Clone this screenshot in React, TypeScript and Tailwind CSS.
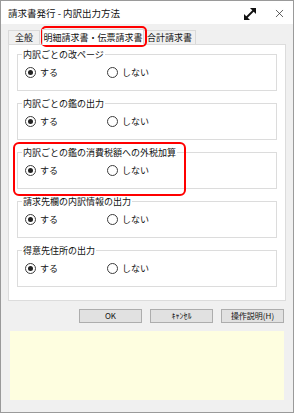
import { X } from 'lucide-react';

const groups = [
  '内訳ごとの改ページ',
  '内訳ごとの鑑の出力',
  '内訳ごとの鑑の消費税額への外税加算',
  '請求先欄の内訳情報の出力',
  '得意先住所の出力',
];

function Radio({ checked, label }: { checked: boolean; label: string }) {
  return (
    <div className="flex items-center gap-[4px]">
      <span className="w-[11px] h-[11px] rounded-full border border-[#3c3c3c] bg-white flex items-center justify-center">
        {checked && <span className="w-[5px] h-[5px] rounded-full bg-[#222]" />}
      </span>
      <span>{label}</span>
    </div>
  );
}

function Group({ title }: { title: string }) {
  return (
    <fieldset className="border border-[#dcdcdc] h-[43px] px-[7px] mb-[6px]">
      <legend className="px-[1px] ml-[-3px] leading-[13px]">{title}</legend>
      <div className="flex items-center pt-[5px]">
        <div className="w-[82px]">
          <Radio checked label="する" />
        </div>
        <Radio checked={false} label="しない" />
      </div>
    </fieldset>
  );
}

export default function App() {
  return (
    <div
      className="relative w-[294px] h-[413px] bg-[#f0f0f0] border border-[#9a9a9a] flex flex-col text-[9px] text-[#111]"
      style={{ fontFamily: '"Noto Sans CJK JP", "Noto Sans", sans-serif' }}
    >
      {/* title bar */}
      <div className="h-[23px] bg-white flex items-center pl-[7px] pr-[7px] pt-[2px]">
        <span className="flex-1 text-[9.5px]">請求書発行 - 内訳出力方法</span>
        <svg width="16" height="16" viewBox="0 0 16 16" className="mr-[15px]">
          <path d="M3 13 L13 3" stroke="#111" strokeWidth="1.8" />
          <path d="M8 2 H14 V8 Z" fill="#111" />
          <path d="M2 8 V14 H8 Z" fill="#111" />
        </svg>
        <X size={13} strokeWidth={1.3} className="text-[#222]" />
      </div>

      <div className="px-[7px] pt-[4px]">
        {/* tabs */}
        <div className="flex items-end h-[16px]">
          <div className="h-[14px] w-[32px] border border-b-0 border-[#d9d9d9] bg-[#f0f0f0] flex items-center justify-center">全般</div>
          <div className="h-[16px] w-[102px] ml-[2px] border border-b-0 border-[#d9d9d9] bg-white flex items-center justify-center relative z-10 mb-[-1px]">
            明細請求書・伝票請求書
          </div>
          <div className="h-[14px] w-[52px] border border-b-0 border-l-0 border-[#d9d9d9] bg-[#f0f0f0] flex items-center justify-center">合計請求書</div>
        </div>

        {/* panel */}
        <div className="bg-white border border-[#dcdcdc] h-[257px] px-[8px] pt-[3px]">
          {groups.map((g) => (
            <Group key={g} title={g} />
          ))}
        </div>

        {/* buttons */}
        <div className="flex justify-end gap-[8px] mt-[8px] pr-[2px]">
          {['OK', 'ｷｬﾝｾﾙ', '操作説明(H)'].map((b) => (
            <button
              key={b}
              className="w-[63px] h-[14px] bg-[#e1e1e1] border border-[#adadad] text-[8px] leading-none flex items-center justify-center"
            >
              {b}
            </button>
          ))}
        </div>

        {/* message area */}
        <div className="mt-[8px] ml-[2px] mr-[2px] h-[69px] bg-[#fefee0]" />
      </div>

      {/* highlight annotations */}
      <div className="absolute left-[40px] top-[25px] w-[106px] h-[21px] border-[2.5px] border-[#ff0000] rounded-[5px]" />
      <div className="absolute left-[12px] top-[141px] w-[173px] h-[54px] border-[2.5px] border-[#ff0000] rounded-[6px]" />
    </div>
  );
}
